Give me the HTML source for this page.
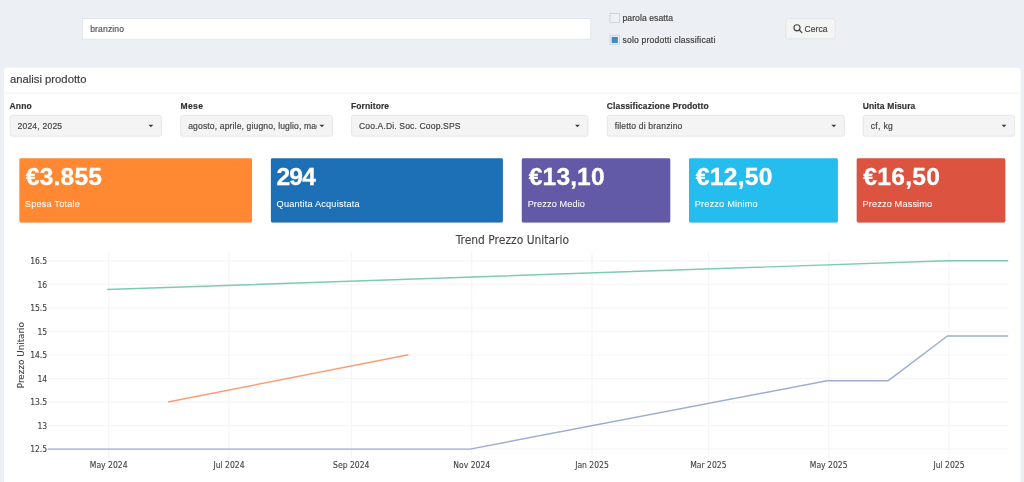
<!DOCTYPE html>
<html lang="it">
<head>
<meta charset="utf-8">
<title>analisi prodotto</title>
<style>
  html, body { margin: 0; padding: 0; }
  body {
    width: 1024px; height: 482px; overflow: hidden; position: relative;
    background: #ecf0f5;
    font-family: "Liberation Sans", Arial, sans-serif;
    color: #444;
  }
  #root { position: absolute; left: 0; top: 0; width: 1024px; height: 482px; overflow: hidden; will-change: transform; }
  #shapes, #chart { position: absolute; left: 0; top: 0; width: 1024px; height: 482px; }
  .t { position: absolute; margin: 0; padding: 0; white-space: nowrap; line-height: 1; -webkit-text-stroke: 0.18px; }
  h3.t { -webkit-text-stroke: 0.3px; }
  p.t { -webkit-text-stroke: 0.05px; }
  .clip { position: absolute; overflow: hidden; }
  #chart text { font-family: "DejaVu Sans Condensed", "DejaVu Sans", Verdana, sans-serif; fill: #444; stroke: #444; stroke-width: 0.12px; }
</style>
</head>
<body>
<div id="root">

<svg id="shapes" viewBox="0 0 1024 482">
<rect x="82.56" y="18.55" width="508.29" height="20.59" rx="0" fill="#fff" stroke="#dce0e7" stroke-width="0.71" />
<rect x="609.96" y="13.36" width="9.49" height="9.14" rx="0" fill="#eef1f6" stroke="#c3c7d1" stroke-width="0.71" />
<rect x="609.96" y="35.25" width="9.49" height="9.29" rx="0" fill="#eef1f6" stroke="#c3c7d1" stroke-width="0.71" />
<rect x="611.65" y="36.95" width="6.20" height="6.05" rx="0" fill="#3f8bc8" />
<rect x="785.75" y="18.66" width="49.49" height="20.29" rx="2.1" fill="#f4f4f4" stroke="#dcdfe4" stroke-width="0.71" />
<g fill="none" stroke="#444"><circle cx="797" cy="27.75" r="3.05" stroke-width="1.15"/><path d="M799.3 30.05L801.9 32.65" stroke-width="1.25" stroke-linecap="round"/></g>
<path d="M4 490V69.9a2.1 2.1 0 0 1 2.1-2.1H1018.4a2.1 2.1 0 0 1 2.1 2.1V490z" fill="#fff"/>
<rect x="4" y="92.85" width="1016.5" height="0.71" fill="#f1f1f1"/>
<rect x="10.16" y="115.45" width="151.29" height="20.79" rx="2.1" fill="#f4f4f4" stroke="#e0e0e0" stroke-width="0.71" />
<path d="M148.50 124.75h4.8l-2.4 2.45z" fill="#3a3a3a"/>
<rect x="180.66" y="115.45" width="151.79" height="20.79" rx="2.1" fill="#f4f4f4" stroke="#e0e0e0" stroke-width="0.71" />
<path d="M319.50 124.75h4.8l-2.4 2.45z" fill="#3a3a3a"/>
<rect x="351.56" y="115.45" width="236.39" height="20.79" rx="2.1" fill="#f4f4f4" stroke="#e0e0e0" stroke-width="0.71" />
<path d="M575.00 124.75h4.8l-2.4 2.45z" fill="#3a3a3a"/>
<rect x="607.25" y="115.45" width="237.09" height="20.79" rx="2.1" fill="#f4f4f4" stroke="#e0e0e0" stroke-width="0.71" />
<path d="M831.40 124.75h4.8l-2.4 2.45z" fill="#3a3a3a"/>
<rect x="863.15" y="115.45" width="151.39" height="20.79" rx="2.1" fill="#f4f4f4" stroke="#e0e0e0" stroke-width="0.71" />
<path d="M1001.60 124.75h4.8l-2.4 2.45z" fill="#3a3a3a"/>
<rect x="19.40" y="159.00" width="232.60" height="64.20" rx="1.4" fill="rgba(0,0,0,0.10)" />
<rect x="19.40" y="158.30" width="232.60" height="64.20" rx="1.4" fill="#ff8833" />
<rect x="270.90" y="159.00" width="232.00" height="64.20" rx="1.4" fill="rgba(0,0,0,0.10)" />
<rect x="270.90" y="158.30" width="232.00" height="64.20" rx="1.4" fill="#1e70b6" />
<rect x="521.80" y="159.00" width="148.50" height="64.20" rx="1.4" fill="rgba(0,0,0,0.10)" />
<rect x="521.80" y="158.30" width="148.50" height="64.20" rx="1.4" fill="#625aa6" />
<rect x="689.00" y="159.00" width="148.90" height="64.20" rx="1.4" fill="rgba(0,0,0,0.10)" />
<rect x="689.00" y="158.30" width="148.90" height="64.20" rx="1.4" fill="#25bdee" />
<rect x="856.70" y="159.00" width="148.60" height="64.20" rx="1.4" fill="rgba(0,0,0,0.10)" />
<rect x="856.70" y="158.30" width="148.60" height="64.20" rx="1.4" fill="#dc5340" />
</svg>

<!-- search row -->
<div class="searchbar">
  <span id="t-branzino" class="t" style="left:90.19px; top:25px; font-size:8.55px; font-weight:normal; color:#555; letter-spacing:0.149px;">branzino</span>
  <span id="t-parola" class="t" style="left:622.49px; top:14px; font-size:8.55px; font-weight:normal; color:#3a3a3a; letter-spacing:0.092px;">parola esatta</span>
  <span id="t-solo" class="t" style="left:622.49px; top:36px; font-size:8.55px; font-weight:normal; color:#3a3a3a; letter-spacing:0.198px;">solo prodotti classificati</span>
  <span id="t-cerca" class="t" style="left:804.48px; top:25px; font-size:8.6px; font-weight:normal; color:#444; letter-spacing:0.050px;">Cerca</span>
</div>

<!-- main box -->
<section class="box">
  <h2 id="t-title" class="t" style="left:10.00px; top:73px; font-size:11.6px; font-weight:normal; color:#3c3c3c; letter-spacing:0.000px; transform-origin:0 0; transform:scaleX(0.972);">analisi prodotto</h2>
  <div class="filters">
    <label id="t-Anno" class="t" style="left:9.59px; top:102px; font-size:8.5px; font-weight:bold; color:#333; letter-spacing:0.151px;">Anno</label>
    <label id="t-Mese" class="t" style="left:180.39px; top:102px; font-size:8.5px; font-weight:bold; color:#333; letter-spacing:0.447px;">Mese</label>
    <label id="t-Fornitore" class="t" style="left:350.89px; top:102px; font-size:8.5px; font-weight:bold; color:#333; letter-spacing:0.114px;">Fornitore</label>
    <label id="t-Classif" class="t" style="left:606.84px; top:102px; font-size:8.5px; font-weight:bold; color:#333; letter-spacing:0.116px;">Classificazione Prodotto</label>
    <label id="t-Unita" class="t" style="left:862.69px; top:102px; font-size:8.5px; font-weight:bold; color:#333; letter-spacing:0.150px;">Unita Misura</label>
    <span id="t-2024" class="t" style="left:17.49px; top:122px; font-size:8.55px; font-weight:normal; color:#444; letter-spacing:0.206px;">2024, 2025</span>
    <div class="clip" style="left:184px; top:117px; width:133.0px; height:18px;"><span id="t-agosto" class="t" style="left:4.20px; top:5px; font-size:8.55px; color:#444; letter-spacing:0.145px;">agosto, aprile, giugno, luglio, maggio, marzo</span></div>
    <span id="t-Coo" class="t" style="left:358.99px; top:122px; font-size:8.55px; font-weight:normal; color:#444; letter-spacing:0.142px;">Coo.A.Di. Soc. Coop.SPS</span>
    <span id="t-filetto" class="t" style="left:614.69px; top:122px; font-size:8.55px; font-weight:normal; color:#444; letter-spacing:0.168px;">filetto di branzino</span>
    <span id="t-cf" class="t" style="left:870.69px; top:122px; font-size:8.55px; font-weight:normal; color:#444; letter-spacing:0.350px;">cf, kg</span>
  </div>
  <div class="valueboxes">
    <h3 id="t-v1" class="t" style="left:25.82px; top:165px; font-size:24.6px; font-weight:bold; color:#fff; letter-spacing:0.190px;">€3.855</h3><p id="t-p1" class="t" style="left:24.85px; top:200px; font-size:9.2px; font-weight:normal; color:#fff; letter-spacing:0.179px;">Spesa Totale</p>
    <h3 id="t-v2" class="t" style="left:276.42px; top:165px; font-size:24.6px; font-weight:bold; color:#fff; letter-spacing:-0.800px;">294</h3><p id="t-p2" class="t" style="left:276.55px; top:200px; font-size:9.2px; font-weight:normal; color:#fff; letter-spacing:0.184px;">Quantita Acquistata</p>
    <h3 id="t-v3" class="t" style="left:528.82px; top:165px; font-size:24.6px; font-weight:bold; color:#fff; letter-spacing:0.110px;">€13,10</h3><p id="t-p3" class="t" style="left:527.65px; top:200px; font-size:9.2px; font-weight:normal; color:#fff; letter-spacing:0.105px;">Prezzo Medio</p>
    <h3 id="t-v4" class="t" style="left:695.72px; top:165px; font-size:24.6px; font-weight:bold; color:#fff; letter-spacing:0.310px;">€12,50</h3><p id="t-p4" class="t" style="left:694.75px; top:200px; font-size:9.2px; font-weight:normal; color:#fff; letter-spacing:0.176px;">Prezzo Minimo</p>
    <h3 id="t-v5" class="t" style="left:863.22px; top:165px; font-size:24.6px; font-weight:bold; color:#fff; letter-spacing:0.310px;">€16,50</h3><p id="t-p5" class="t" style="left:862.55px; top:200px; font-size:9.2px; font-weight:normal; color:#fff; letter-spacing:0.133px;">Prezzo Massimo</p>
  </div>
  <svg id="chart" viewBox="0 0 1024 482">
    <g stroke="#f5f5f6" stroke-width="1.2" fill="none">
      <path d="M108.7 251V458.4M229 251V458.4M351.3 251V458.4M471.7 251V458.4M592 251V458.4M708.4 251V458.4M828.7 251V458.4M949 251V458.4"/>
      <path d="M47.8 260.9H1008.2M47.8 284.3H1008.2M47.8 307.9H1008.2M47.8 331.4H1008.2M47.8 355.0H1008.2M47.8 378.6H1008.2M47.8 402.1H1008.2M47.8 425.7H1008.2M47.8 449.2H1008.2"/>
    </g>
    <g fill="none" stroke-width="1.45" stroke-linejoin="round" stroke-opacity="0.86">
      <path d="M107.1 289.5L947.4 260.8L1008.2 260.8" stroke="#66c2a5"/>
      <path d="M167.9 402L408.5 354.7" stroke="#fc8d62"/>
      <path d="M47.6 449.1L470 449.1L826.8 380.8L888 380.8L947.4 336L1008.2 336" stroke="#8da0cb"/>
    </g>
    <text x="512.4" y="243.6" font-size="11.6" text-anchor="middle" textLength="113.3" lengthAdjust="spacingAndGlyphs">Trend Prezzo Unitario</text>
    <g font-size="8.53" text-anchor="end">
      <text x="47.2" y="264">16.5</text>
      <text x="47.2" y="288">16</text>
      <text x="47.2" y="311">15.5</text>
      <text x="47.2" y="335">15</text>
      <text x="47.2" y="358">14.5</text>
      <text x="47.2" y="382">14</text>
      <text x="47.2" y="405">13.5</text>
      <text x="47.2" y="429">13</text>
      <text x="47.2" y="452">12.5</text>
    </g>
    <g font-size="8.53" text-anchor="middle">
      <text x="108.7" y="467.5">May 2024</text>
      <text x="229" y="467.5">Jul 2024</text>
      <text x="351.3" y="467.5">Sep 2024</text>
      <text x="471.7" y="467.5">Nov 2024</text>
      <text x="592" y="467.5">Jan 2025</text>
      <text x="708.4" y="467.5">Mar 2025</text>
      <text x="828.7" y="467.5">May 2025</text>
      <text x="949" y="467.5">Jul 2025</text>
    </g>
    <text font-size="8.8" font-family="DejaVu Sans, Verdana, sans-serif" style="font-family:'DejaVu Sans',Verdana,sans-serif" text-anchor="middle" transform="translate(23.85 355.15) rotate(-90)">Prezzo Unitario</text>
  </svg>

</section>

</div>
</body>
</html>
